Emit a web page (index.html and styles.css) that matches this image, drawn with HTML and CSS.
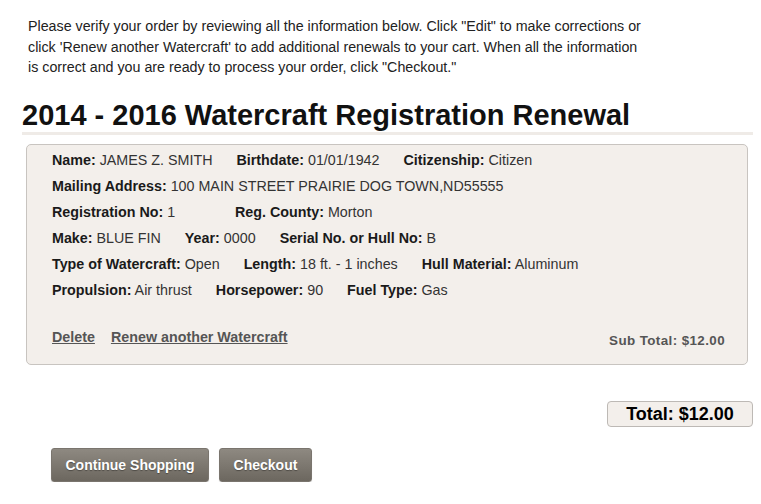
FILE: index.html
```html
<!DOCTYPE html>
<html>
<head>
<meta charset="utf-8">
<link rel="stylesheet" href="styles.css">
</head>
<body>
<div class="page">
  <p class="intro">Please verify your order by reviewing all the information below. Click "Edit" to make corrections or click 'Renew another Watercraft' to add additional renewals to your cart. When all the information is correct and you are ready to process your order, click "Checkout."</p>
  <h1 class="title">2014 - 2016 Watercraft Registration Renewal</h1>
  <div class="card">
    <div class="row"><span class="item"><b>Name:</b> JAMES Z. SMITH</span><span class="item"><b>Birthdate:</b> 01/01/1942</span><span class="item"><b>Citizenship:</b> Citizen</span></div>
    <div class="row"><span class="item"><b>Mailing Address:</b> 100 MAIN STREET PRAIRIE DOG TOWN,ND55555</span></div>
    <div class="row"><span class="item w-reg"><b>Registration No:</b> 1</span><span class="item"><b>Reg. County:</b> Morton</span></div>
    <div class="row"><span class="item"><b>Make:</b> BLUE FIN</span><span class="item"><b>Year:</b> 0000</span><span class="item"><b>Serial No. or Hull No:</b> B</span></div>
    <div class="row"><span class="item"><b>Type of Watercraft:</b> Open</span><span class="item"><b>Length:</b> 18 ft. - 1 inches</span><span class="item"><b>Hull Material:</b> Aluminum</span></div>
    <div class="row"><span class="item"><b>Propulsion:</b> Air thrust</span><span class="item"><b>Horsepower:</b> 90</span><span class="item"><b>Fuel Type:</b> Gas</span></div>
    <div class="card-foot">
      <div class="links"><a href="#" class="link">Delete</a><a href="#" class="link">Renew another Watercraft</a></div>
      <div class="subtotal">Sub Total: $12.00</div>
    </div>
  </div>
  <div class="total-wrap"><div class="total">Total: $12.00</div></div>
  <div class="buttons">
    <button class="btn">Continue Shopping</button>
    <button class="btn">Checkout</button>
  </div>
</div>
</body>
</html>
```
FILE: styles.css
```css
html, body {
  margin: 0;
  padding: 0;
  background: #fff;
}
body {
  font-family: "Liberation Sans", Arial, sans-serif;
  color: #222;
}
.page {
  padding: 16px 8px 0 22px;
}
.intro {
  margin: 0 0 0 6px;
  width: 622px;
  font-size: 14.25px;
  line-height: 20.5px;
  color: #222;
}
.title {
  margin: 21px 0 0 0;
  font-size: 29px;
  line-height: 32px;
  font-weight: bold;
  color: #111;
  padding-bottom: 1px;
  border-bottom: 3px solid #efebe7;
}
.card {
  margin: 9px 5px 0 4px;
  background: #f3efeb;
  border: 1px solid #c8c4c0;
  border-radius: 5px;
  padding: 2px 22px 18px 25px;
}
.row {
  display: flex;
  gap: 24px;
  font-size: 14.3px;
  line-height: 26px;
  color: #333;
}
.row b {
  color: #1a1a1a;
}
.w-reg {
  width: 159px;
}
.card-foot {
  display: flex;
  justify-content: space-between;
  align-items: baseline;
  margin-top: 26px;
  line-height: 16px;
}
.links {
  display: flex;
  gap: 16px;
}
.link {
  font-size: 14.3px;
  font-weight: bold;
  color: #555;
  text-decoration: underline;
}
.subtotal {
  font-size: 13.4px;
  font-weight: bold;
  color: #555;
  letter-spacing: 0.4px;
  position: relative;
  top: 3px;
}
.total-wrap {
  display: flex;
  justify-content: flex-end;
  margin-top: 36px;
}
.total {
  width: 144px;
  height: 24px;
  line-height: 24px;
  text-align: center;
  font-size: 18px;
  font-weight: bold;
  color: #000;
  background: #f3efeb;
  border: 1px solid #bdb9b5;
  border-radius: 4px;
}
.buttons {
  display: flex;
  gap: 10px;
  margin: 21px 0 0 29px;
}
.btn {
  height: 34px;
  padding: 0 13.5px;
  font-family: "Liberation Sans", Arial, sans-serif;
  font-size: 14px;
  font-weight: bold;
  color: #fff;
  text-shadow: 0 1px 1px rgba(0,0,0,0.35);
  background: linear-gradient(#8e8981, #6c675f);
  border: 1px solid #7a756e;
  border-radius: 3px;
  box-shadow: 0 1px 1px rgba(0,0,0,0.15);
}
```
